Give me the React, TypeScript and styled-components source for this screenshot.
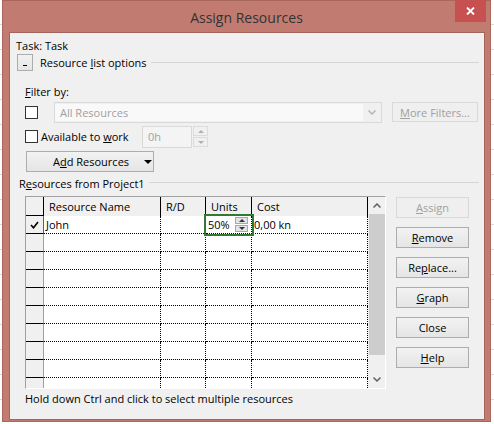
import React from 'react';
import styled, { createGlobalStyle } from 'styled-components';

const GlobalStyle = createGlobalStyle`
  html, body { margin: 0; padding: 0; }
  body {
    font-family: 'Open Sans', 'Noto Sans', sans-serif;
    font-size: 11px;
    color: #000;
  }
`;

const Desktop = styled.div`
  width: 494px;
  height: 424px;
  overflow: hidden;
  box-sizing: border-box;
  padding-left: 2px;
  background-color: #fff;
  background-image: repeating-linear-gradient(to bottom, transparent 0 24px, #d8d8d8 24px 25px);
`;

const Window = styled.div`
  width: 489px;
  height: 422px;
  box-sizing: border-box;
  background: #c27b71;
  border: 1px solid #a9665d;
  display: flex;
  flex-direction: column;
`;

const TitleBar = styled.div`
  height: 31px;
  display: grid;
  grid-template-columns: 1fr auto 1fr;
  align-items: center;
`;

const Title = styled.div`
  grid-column: 2;
  font-size: 14px;
  color: #333;
  margin-top: 1px;
`;

const CloseButton = styled.div`
  grid-column: 3;
  justify-self: end;
  align-self: start;
  width: 31px;
  height: 22px;
  margin-top: -1px;
  margin-right: 4px;
  background: #c75050;
  display: flex;
  align-items: center;
  justify-content: center;
`;

const Client = styled.div`
  margin: 0 5px 1px 6px;
  height: 388px;
  box-sizing: border-box;
  border: 1px solid #a3645b;
  background: #f0f0f0;
  padding: 6px 5px 0 6px;
  display: flex;
  flex-direction: column;
`;

const Line = styled.div<{ $top?: number; $indent?: number }>`
  height: 14px;
  line-height: 14px;
  white-space: nowrap;
  margin-top: ${p => p.$top ?? 0}px;
  padding-left: ${p => p.$indent ?? 0}px;
`;

const HeadingRow = styled.div<{ $top: number; $indent: number; $h: number }>`
  display: flex;
  align-items: center;
  margin-top: ${p => p.$top}px;
  padding-left: ${p => p.$indent}px;
  height: ${p => p.$h}px;
  white-space: nowrap;
`;

const Rule = styled.div`
  flex: 1;
  height: 1px;
  margin-left: 4px;
  margin-top: -1px;
  background: #d5d5d5;
`;

const Toggle = styled.div`
  width: 16px;
  height: 17px;
  box-sizing: border-box;
  border: 1px solid #adadad;
  background: linear-gradient(#f2f2f2, #e5e5e5);
  margin-right: 7px;
  display: flex;
  justify-content: center;
  align-items: flex-end;
  padding-bottom: 4px;
  &::after {
    content: '';
    width: 4px;
    height: 1px;
    background: #000;
  }
`;

const Group = styled.div`
  padding-left: 9px;
  display: flex;
  flex-direction: column;
`;

const Row = styled.div<{ $top: number }>`
  display: flex;
  align-items: center;
  height: 21px;
  margin-top: ${p => p.$top}px;
`;

const CheckBox = styled.div`
  width: 13px;
  height: 13px;
  box-sizing: border-box;
  border: 1px solid #333;
  background: #fff;
  flex-shrink: 0;
`;

const CheckLabel = styled.span`
  width: 101px;
  margin-left: 3px;
  white-space: nowrap;
`;

const Combo = styled.div`
  width: 328px;
  height: 21px;
  box-sizing: border-box;
  margin-left: 16px;
  border: 1px solid #d9d9d9;
  background: #f0f0f0;
  display: flex;
  align-items: stretch;
`;

const ComboField = styled.div`
  flex: 1;
  margin: 1px 0;
  background: #f9f9f9;
  color: #a0a0a0;
  padding-left: 5px;
  display: flex;
  align-items: center;
`;

const ComboArrow = styled.div`
  width: 18px;
  display: flex;
  align-items: center;
  justify-content: center;
`;

const Button = styled.div<{ $w: number; $h?: number; $disabled?: boolean }>`
  width: ${p => p.$w}px;
  height: ${p => p.$h ?? 21}px;
  box-sizing: border-box;
  flex-shrink: 0;
  border: 1px solid ${p => (p.$disabled ? '#d9d9d9' : '#adadad')};
  background: ${p => (p.$disabled ? '#efefef' : 'linear-gradient(#f2f2f2, #e5e5e5)')};
  color: ${p => (p.$disabled ? '#a0a0a0' : '#000')};
  display: flex;
  align-items: center;
  justify-content: center;
  white-space: nowrap;
`;

const FilterButton = styled(Button)`
  margin-left: 10px;
  align-self: flex-start;
`;

const SplitButton = styled(Button)`
  margin-left: 1px;
  justify-content: flex-start;
  padding-left: 26px;
`;

const SplitArrow = styled.span`
  margin-left: 15px;
  width: 0;
  height: 0;
  border-left: 4px solid transparent;
  border-right: 4px solid transparent;
  border-top: 4px solid #000;
`;

const TextInput = styled.div`
  width: 50px;
  height: 22px;
  box-sizing: border-box;
  border: 1px solid #d9d9d9;
  background: #f4f4f4;
  color: #a0a0a0;
  padding-left: 5px;
  display: flex;
  align-items: center;
`;

const Spin = styled.div<{ $w: number; $h: number }>`
  width: ${p => p.$w}px;
  height: ${p => p.$h}px;
  margin-left: 1px;
  display: flex;
  flex-direction: column;
  gap: 1px;
  flex-shrink: 0;
`;

const SpinHalf = styled.div<{ $dark?: boolean }>`
  flex: 1;
  box-sizing: border-box;
  border: 1px solid ${p => (p.$dark ? '#a8a8a8' : '#dcdcdc')};
  background: ${p => (p.$dark ? '#e4e4e4' : '#f0f0f0')};
  display: flex;
  align-items: center;
  justify-content: center;
`;

const Tri = styled.span<{ $up?: boolean; $color: string }>`
  width: 0;
  height: 0;
  border-left: 3px solid transparent;
  border-right: 3px solid transparent;
  ${p => (p.$up ? `border-bottom: 3px solid ${p.$color};` : `border-top: 3px solid ${p.$color};`)}
`;

const Main = styled.div`
  display: flex;
  margin-top: 6px;
  padding-left: 9px;
`;

const Table = styled.div`
  width: 361px;
  height: 193px;
  box-sizing: border-box;
  border-top: 1px solid #a0a0a0;
  border-left: 1px solid #a0a0a0;
  border-right: 1px solid #fff;
  border-bottom: 1px solid #fff;
  background: #fff;
  display: flex;
  overflow: hidden;
`;

const Grid = styled.div`
  display: grid;
  grid-template-columns: 18px 117px 45px 46px 116px;
  grid-template-rows: 19px;
  grid-auto-rows: 18px;
  align-content: start;
`;

type CellKind = 'corner' | 'head' | 'rowhead' | 'data';

const Cell = styled.div<{ $kind: CellKind; $active?: boolean }>`
  box-sizing: border-box;
  white-space: nowrap;
  display: flex;
  align-items: center;
  ${p => {
    switch (p.$kind) {
      case 'corner':
        return 'background:#f0f0f0; border-right:1px solid #000; border-bottom:1px solid #000;';
      case 'head':
        return 'background:#f0f0f0; border-right:1px solid #000; padding-left:5px;';
      case 'rowhead':
        return `background:#f0f0f0; border-right:1px solid ${p.$active ? '#3a7a3a' : '#a0a0a0'}; border-bottom:1px solid #000; justify-content:center;`;
      default:
        return 'background:#fff; border-right:1px dotted #000; border-bottom:1px dotted #000; padding-left:2px;';
    }
  }}
`;

const UnitsCell = styled(Cell)`
  position: relative;
  z-index: 1;
  outline: 2px solid #327a32;
  padding-right: 3px;
  justify-content: space-between;
`;

const Scrollbar = styled.div`
  width: 17px;
  background: #f0f0f0;
  display: flex;
  flex-direction: column;
`;

const ScrollArrow = styled.div`
  height: 17px;
  display: flex;
  align-items: center;
  justify-content: center;
  flex-shrink: 0;
`;

const Thumb = styled.div`
  height: 141px;
  margin-left: 1px;
  background: #cdcdcd;
`;

const Track = styled.div`
  flex: 1;
`;

const ButtonColumn = styled.div`
  margin-left: 10px;
  margin-top: 1px;
  display: flex;
  flex-direction: column;
  gap: 9px;
`;

const Chevron = ({ up, color = '#555' }: { up?: boolean; color?: string }) => (
  <svg width="8" height="5" viewBox="0 0 8 5">
    <path d={up ? 'M0.5 4.5 L4 1 L7.5 4.5' : 'M0.5 0.5 L4 4 L7.5 0.5'} fill="none" stroke={color} strokeWidth="1.5" />
  </svg>
);

const rows = 10;

export default function App() {
  return (
    <Desktop>
      <GlobalStyle />
      <Window>
        <TitleBar>
          <Title>Assign Resources</Title>
          <CloseButton>
            <svg width="9" height="8" viewBox="0 0 9 8">
              <path d="M1 0.5 L8 7.5 M8 0.5 L1 7.5" stroke="#fff" strokeWidth="1.8" />
            </svg>
          </CloseButton>
        </TitleBar>
        <Client>
          <Line>Task: Task</Line>
          <HeadingRow $top={1} $indent={1} $h={17}>
            <Toggle />
            <span>
              Resource <u>l</u>ist options
            </span>
            <Rule />
          </HeadingRow>
          <Group>
            <Line $top={14}>
              <u>F</u>ilter by:
            </Line>
            <Row $top={3}>
              <CheckBox />
              <Combo>
                <ComboField>All Resources</ComboField>
                <ComboArrow>
                  <Chevron color="#b5b5b5" />
                </ComboArrow>
              </Combo>
              <FilterButton $w={86} $h={20} $disabled>
                <u>M</u>ore Filters...
              </FilterButton>
            </Row>
            <Row $top={3}>
              <CheckBox />
              <CheckLabel>
                Available to <u>w</u>ork
              </CheckLabel>
              <TextInput>0h</TextInput>
              <Spin $w={15} $h={21}>
                <SpinHalf>
                  <Tri $up $color="#b0b0b0" />
                </SpinHalf>
                <SpinHalf>
                  <Tri $color="#b0b0b0" />
                </SpinHalf>
              </Spin>
            </Row>
            <Row $top={4}>
              <SplitButton $w={128}>
                A<u>d</u>d Resources
                <SplitArrow />
              </SplitButton>
            </Row>
          </Group>
          <HeadingRow $top={4} $indent={3} $h={14}>
            <span>
              R<u>e</u>sources from Project1
            </span>
            <Rule />
          </HeadingRow>
          <Main>
            <Table>
              <Grid>
                <Cell $kind="corner" />
                <Cell $kind="head">Resource Name</Cell>
                <Cell $kind="head">R/D</Cell>
                <Cell $kind="head">Units</Cell>
                <Cell $kind="head">Cost</Cell>
                {Array.from({ length: rows }).map((_, i) => (
                  <React.Fragment key={i}>
                    <Cell $kind="rowhead" $active={i === 0}>
                      {i === 0 && (
                        <svg width="9" height="8" viewBox="0 0 9 8">
                          <path d="M1 4 L3.5 6.8 L8 1" fill="none" stroke="#000" strokeWidth="1.6" />
                        </svg>
                      )}
                    </Cell>
                    <Cell $kind="data">{i === 0 ? 'John' : ''}</Cell>
                    <Cell $kind="data" />
                    {i === 0 ? (
                      <UnitsCell $kind="data">
                        50%
                        <Spin $w={13} $h={15}>
                          <SpinHalf $dark>
                            <Tri $up $color="#333" />
                          </SpinHalf>
                          <SpinHalf $dark>
                            <Tri $color="#333" />
                          </SpinHalf>
                        </Spin>
                      </UnitsCell>
                    ) : (
                      <Cell $kind="data" />
                    )}
                    <Cell $kind="data">{i === 0 ? '0,00 kn' : ''}</Cell>
                  </React.Fragment>
                ))}
              </Grid>
              <Scrollbar>
                <ScrollArrow>
                  <Chevron up color="#606060" />
                </ScrollArrow>
                <Thumb />
                <Track />
                <ScrollArrow>
                  <Chevron color="#606060" />
                </ScrollArrow>
              </Scrollbar>
            </Table>
            <ButtonColumn>
              <Button $w={73} $disabled>
                <u>A</u>ssign
              </Button>
              <Button $w={73}>
                <u>R</u>emove
              </Button>
              <Button $w={73}>
                Re<u>p</u>lace...
              </Button>
              <Button $w={73}>
                <u>G</u>raph
              </Button>
              <Button $w={73}>Close</Button>
              <Button $w={73}>
                <u>H</u>elp
              </Button>
            </ButtonColumn>
          </Main>
          <Line $top={3} $indent={9}>
            Hold down Ctrl and click to select multiple resources
          </Line>
        </Client>
      </Window>
    </Desktop>
  );
}
